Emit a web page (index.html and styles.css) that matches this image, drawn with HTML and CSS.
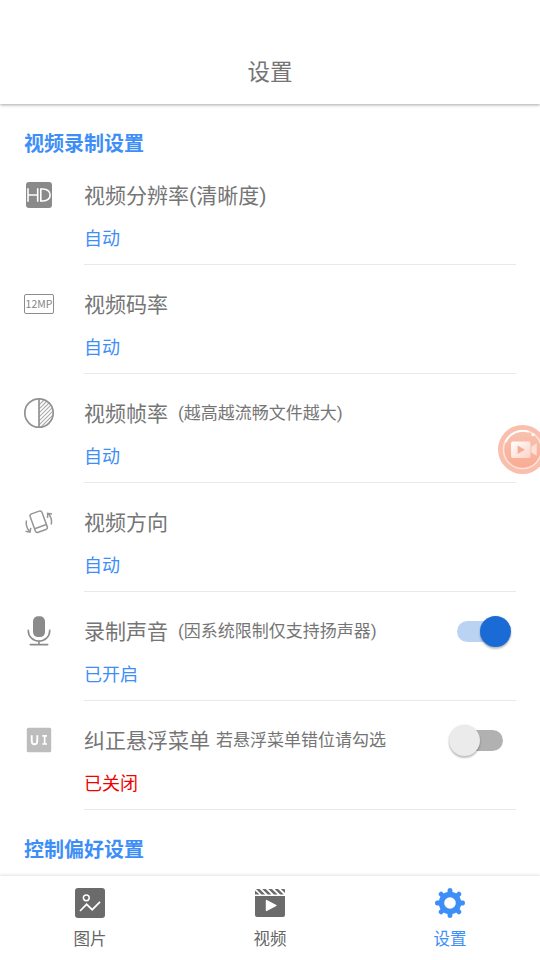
FILE: index.html
```html
<!DOCTYPE html>
<html lang="zh-CN">
<head>
<meta charset="utf-8">
<title>设置</title>
<link rel="stylesheet" href="styles.css">
</head>
<body>
<div class="app">
  <header class="header"><h1>设置</h1></header>
  <main class="content">
    <h2 class="section">视频录制设置</h2>
    <div class="row">
      <svg class="icon" viewBox="0 0 32 32"><rect x="3" y="3" width="26" height="26" rx="3" fill="#8a8a8a"/><path d="M5 9.3V22.7M14.7 9.3V22.7M5 16H14.7M17.8 10V22H20C29.5 22 29.5 10 20 10Z" fill="none" stroke="#fff" stroke-width="1.6"/></svg>
      <div class="body"><div class="line"><span class="name">视频分辨率(清晰度)</span></div><div class="value">自动</div></div>
    </div>
    <div class="row">
      <svg class="icon" viewBox="0 0 32 32"><rect x="1.5" y="6.5" width="29" height="19" rx="1.5" fill="none" stroke="#8c8c8c"/><text class="mp" x="16" y="20" text-anchor="middle">12MP</text></svg>
      <div class="body"><div class="line"><span class="name">视频码率</span></div><div class="value">自动</div></div>
    </div>
    <div class="row">
      <svg class="icon" viewBox="0 0 32 32"><defs><clipPath id="half"><path d="M16 2A14 14 0 0 1 16 30Z"/></clipPath></defs><path clip-path="url(#half)" d="M14 10L26-2M14 14L30-2M14 18L32 0M14 22L32 4M14 26L32 8M14 30L32 12M14 34L32 16M18 34L32 20" stroke="#aaa" stroke-width="1.2"/><circle cx="16" cy="16" r="14.2" fill="none" stroke="#929292" stroke-width="1.7"/><path d="M16 2V30" stroke="#929292" stroke-width="1.7"/></svg>
      <div class="body"><div class="line"><span class="name">视频帧率</span><span class="note wide">(越高越流畅文件越大)</span></div><div class="value">自动</div></div>
    </div>
    <div class="row">
      <svg class="icon" viewBox="0 0 32 32" fill="none" stroke="#969696" stroke-width="1.5"><g transform="rotate(-20 15.5 15.7)"><rect x="9.4" y="6" width="12.6" height="19.5" rx="2.2"/><path d="M9.4 21H22"/></g><path d="M3.5 14.5C2.7 18 3.3 21.5 6.2 25M2.6 25.2L7 26.2L7.8 21.8M28.2 18.5C29.1 14.5 28.1 11 25.7 8M24.6 12L24.6 7.3L29 8"/></svg>
      <div class="body"><div class="line"><span class="name">视频方向</span></div><div class="value">自动</div></div>
    </div>
    <div class="row">
      <svg class="icon" viewBox="0 0 32 32"><rect x="10" y="1.3" width="12" height="20.8" rx="5" fill="#8b8b8b"/><path d="M5.3 15.3V16A10.7 10 0 0 0 26.7 16V15.3M16 26V29.6M7.3 29.6H24.7" fill="none" stroke="#8b8b8b" stroke-width="1.6" stroke-linecap="round"/></svg>
      <div class="body"><div class="line"><span class="name">录制声音</span><span class="note wide">(因系统限制仅支持扬声器)</span></div><div class="value">已开启</div></div>
      <div class="switch on"><i class="thumb"></i></div>
    </div>
    <div class="row">
      <svg class="icon" viewBox="0 0 32 32"><rect x="3.8" y="3.8" width="24.4" height="24.4" rx="1.5" fill="#bdbdbd"/><path d="M8.7 11.2V16.5C8.7 21.5 14.3 21.5 14.3 16.5V11.2" fill="none" stroke="#fff" stroke-width="1.9"/><path d="M19.3 11.8H24M19.3 20H24M21.65 11.8V20" stroke="#fff" stroke-width="1.7"/></svg>
      <div class="body"><div class="line"><span class="name">纠正悬浮菜单</span><span class="note">若悬浮菜单错位请勾选</span></div><div class="value off-text">已关闭</div></div>
      <div class="switch"><i class="thumb"></i></div>
    </div>
    <h2 class="section">控制偏好设置</h2>
  </main>
  <nav class="nav">
    <div class="tab"><svg class="tab-icon" viewBox="0 0 30 30"><rect width="30" height="30" rx="3" fill="#6b6b6b"/><circle cx="11.3" cy="9.8" r="2.9" fill="none" stroke="#fff" stroke-width="1.5"/><path d="M5 23L11.6 16.3L17.2 21.7L25 13.8" fill="none" stroke="#fff" stroke-width="1.7"/></svg><span>图片</span></div>
    <div class="tab"><svg class="tab-icon" viewBox="0 0 30 30"><path d="M0 8H30V27A2 2 0 0 1 28 29H2A2 2 0 0 1 0 27Z" fill="#6b6b6b"/><path d="M0 2.5L4.5 6.5H0ZM1 1H4.5L10.2 6.5H6.5ZM7.2 1H10.7L16.4 6.5H12.7ZM13.4 1H16.9L22.6 6.5H18.9ZM19.6 1H23.1L28.8 6.5H25.1ZM25.8 1H29A1 1 0 0 1 30 2V5Z" fill="#6b6b6b"/><path d="M11.5 12.5L21 17.5L11.5 22.5Z" fill="#fff" stroke="#fff" stroke-width="1.4" stroke-linejoin="round"/></svg><span>视频</span></div>
    <div class="tab active"><svg class="tab-icon" viewBox="0 0 30 30"><defs><path id="tooth" d="M10 6.5L12.6 4.2V1.7Q12.9 0 15 0Q17.1 0 17.4 1.7V4.2L20 6.5Z"/></defs><g fill="#3e8ef7"><use href="#tooth"/><use href="#tooth" transform="rotate(45 15 15)"/><use href="#tooth" transform="rotate(90 15 15)"/><use href="#tooth" transform="rotate(135 15 15)"/><use href="#tooth" transform="rotate(180 15 15)"/><use href="#tooth" transform="rotate(225 15 15)"/><use href="#tooth" transform="rotate(270 15 15)"/><use href="#tooth" transform="rotate(315 15 15)"/></g><circle cx="15" cy="15" r="8.5" fill="none" stroke="#3e8ef7" stroke-width="5.4"/></svg><span>设置</span></div>
  </nav>
  <div class="recorder"><svg viewBox="0 0 50 50" width="49" height="49"><defs><linearGradient id="cam" x2="1" y2="1"><stop stop-color="#fff"/><stop offset="1" stop-color="#fcd2c6"/></linearGradient><linearGradient id="disc" x2="0" y2="1"><stop stop-color="#f8c2b0"/><stop offset="1" stop-color="#f9ab92"/></linearGradient></defs><circle cx="25" cy="25" r="25" fill="#f9bfac"/><circle cx="25" cy="25" r="19.4" fill="url(#disc)" stroke="#fde3dc" stroke-width="1.6"/><path d="M8 17A19.2 19.2 0 0 1 31 6.8" fill="none" stroke="#fff" stroke-width="1.8" stroke-linecap="round"/><circle cx="35.8" cy="9.8" r="1.7" fill="#fff"/><rect x="13.3" y="16.8" width="19.9" height="16.8" rx="2" fill="url(#cam)"/><path d="M34 22.3L39.5 18.5V31.5L34 28Z" fill="#fde0d8"/><path d="M20 21L27.5 25.2L20 29.5Z" fill="#f6aa97"/></svg></div>
</div>
</body>
</html>
```

FILE: styles.css
```css
* { box-sizing: border-box; }
body {
  margin: 0;
  background: #fff;
  font-family: Roboto, "Noto Sans CJK SC", sans-serif;
  color: #757575;
}
h1, h2 { margin: 0; }
.app {
  position: relative;
  width: 540px;
  height: 960px;
  overflow: hidden;
  display: flex;
  flex-direction: column;
}
.header {
  flex: none;
  height: 104px;
  padding-top: 40px;
  box-shadow: 0 1px 3px rgba(0, 0, 0, .35);
}
.header h1 {
  text-align: center;
  font-size: 22.5px;
  font-weight: 400;
  line-height: 64px;
}
.content {
  flex: 1;
  min-height: 0;
  overflow: hidden;
  padding: 22px 24px 0;
  margin-top: 4px;
}
.section {
  height: 26px;
  line-height: 28px;
  font-size: 20px;
  font-weight: 700;
  color: #3e8ef7;
}
.row {
  display: flex;
  position: relative;
  height: 109px;
}
.row + .section { margin-top: 26px; }
.icon {
  flex: none;
  width: 32px;
  height: 32px;
  margin: 23px 29px 0 -1px;
}
.mp {
  font: 10.5px "Noto Sans CJK SC", sans-serif;
  fill: #858585;
}
.body {
  flex: 1;
  border-bottom: 1px solid #e9e9e9;
  padding-top: 25px;
}
.line {
  display: flex;
  align-items: center;
  height: 30px;
  white-space: nowrap;
}
.name { font-size: 21px; line-height: 30px; }
.note { font-size: 17px; line-height: 28px; margin: 0 0 2px 6px; }
.note.wide { margin-left: 10px; }
.value {
  margin-top: 15px;
  font-size: 18px;
  line-height: 26px;
  color: #3e8ef7;
}
.value.off-text { color: #f20000; }
.switch {
  position: absolute;
  right: 13px;
  top: 29px;
  width: 46px;
  height: 21px;
  border-radius: 11px;
  background: #b1b1b1;
}
.switch.on { background: #bad3f3; }
.thumb {
  position: absolute;
  left: -8px;
  top: -5px;
  width: 31px;
  height: 31px;
  border-radius: 50%;
  background: #ebebeb;
  box-shadow: 0 2px 2px rgba(0, 0, 0, .24), 0 0 2px rgba(0, 0, 0, .12);
}
.on .thumb { left: 23px; background: #1a6bd6; }
.nav {
  flex: none;
  display: flex;
  height: 84px;
  background: #fff;
  box-shadow: 0 -1px 3px rgba(0, 0, 0, .12);
}
.tab {
  flex: 1;
  display: flex;
  flex-direction: column;
  align-items: center;
  padding-top: 12px;
  font-size: 16.5px;
  line-height: 24px;
  color: #666;
}
.tab.active { color: #3e8ef7; }
.tab-icon { width: 30px; height: 30px; margin-bottom: 10px; }
.recorder {
  position: absolute;
  left: 498px;
  top: 425px;
  width: 49px;
  height: 49px;
}
```
